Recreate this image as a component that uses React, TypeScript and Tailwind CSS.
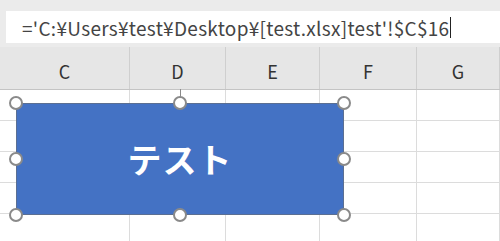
import React from "react";

const cols = [
  { label: "C", w: "w-[135px]", pad: "pl-[5px]" },
  { label: "D", w: "w-[96px]", pad: "" },
  { label: "E", w: "w-[94px]", pad: "" },
  { label: "F", w: "w-[97px]", pad: "" },
  { label: "G", w: "flex-1", pad: "" },
];

const handle = "absolute w-[14px] h-[14px] rounded-full bg-white border-2 border-[#8a8a8a]";

export default function App() {
  const font = { fontFamily: '"Noto Sans CJK JP", "Noto Sans", sans-serif' };
  return (
    <div className="w-[500px] h-[241px] overflow-hidden bg-white relative" style={font}>
      <div className="h-[47px] bg-[#ebebeb] pl-[6px] pt-[11px]">
        <div className="h-[32px] bg-white flex items-center pl-[16px] text-[19px] text-[#444] leading-none tracking-[0.3px]">
          <span>='C:¥Users¥test¥Desktop¥[test.xlsx]test'!$C$16</span>
          <span className="inline-block w-px h-[21px] bg-[#222] ml-[1px]" />
        </div>
      </div>
      <div className="h-[43px] bg-[#e6e6e6] flex ml-[-5px] border-b border-[#c4c4c4]">
        {cols.map((c) => (
          <div
            key={c.label}
            className={`${c.w} ${c.pad} h-full border-r border-[#cfcfcf] flex items-center justify-center pt-[6px] text-[18px] text-[#333]`}
          >
            {c.label}
          </div>
        ))}
      </div>
      {[0, 1, 2, 3, 4].map((r) => (
        <div key={r} className="h-[31px] flex ml-[-5px] border-b border-[#dcdcdc]">
          {cols.map((c) => (
            <div key={c.label} className={`${c.w} h-full border-r border-[#dcdcdc]`} />
          ))}
        </div>
      ))}
      <div className="absolute left-[16px] top-[103px] w-[328px] h-[112px] bg-[#4472c4] border border-[#5b6f92] flex items-center justify-center">
        <span className="text-white font-bold text-[34px] leading-none tracking-[1px]">テスト</span>
        <div className="absolute left-[163px] top-[-15px] w-px h-[14px] bg-[#8a8a8a]" />
        <div className={`${handle} -left-[8px] -top-[8px]`} />
        <div className={`${handle} left-[156px] -top-[8px]`} />
        <div className={`${handle} -right-[8px] -top-[8px]`} />
        <div className={`${handle} -left-[8px] top-[48px]`} />
        <div className={`${handle} -right-[8px] top-[48px]`} />
        <div className={`${handle} -left-[8px] -bottom-[8px]`} />
        <div className={`${handle} left-[156px] -bottom-[8px]`} />
        <div className={`${handle} -right-[8px] -bottom-[8px]`} />
      </div>
    </div>
  );
}
